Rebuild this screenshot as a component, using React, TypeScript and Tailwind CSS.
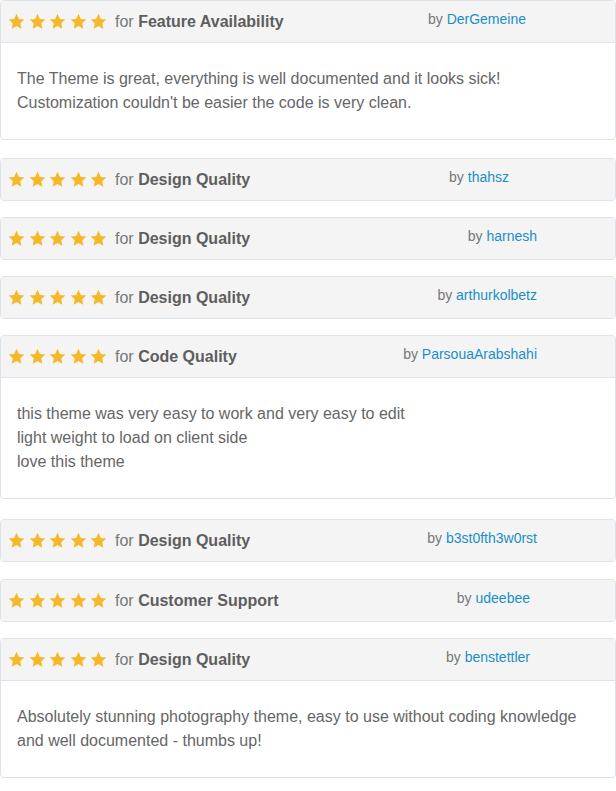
const reviews = [
  {
    category: 'Feature Availability',
    author: 'DerGemeine',
    byPad: 'pr-[89px]',
    gap: 'mb-[18px]',
    body: ['The Theme is great, everything is well documented and it looks sick!', "Customization couldn't be easier the code is very clean."],
  },
  { category: 'Design Quality', author: 'thahsz', byPad: 'pr-[106px]', gap: 'mb-4' },
  { category: 'Design Quality', author: 'harnesh', byPad: 'pr-[78px]', gap: 'mb-4' },
  { category: 'Design Quality', author: 'arthurkolbetz', byPad: 'pr-[78px]', gap: 'mb-4' },
  {
    category: 'Code Quality',
    author: 'ParsouaArabshahi',
    byPad: 'pr-[78px]',
    gap: 'mb-5',
    body: ['this theme was very easy to work and very easy to edit', 'light weight to load on client side', 'love this theme'],
  },
  { category: 'Design Quality', author: 'b3st0fth3w0rst', byPad: 'pr-[78px]', gap: 'mb-[17px]' },
  { category: 'Customer Support', author: 'udeebee', byPad: 'pr-[85px]', gap: 'mb-4' },
  {
    category: 'Design Quality',
    author: 'benstettler',
    byPad: 'pr-[85px]',
    gap: 'mb-4',
    body: ['Absolutely stunning photography theme, easy to use without coding knowledge', 'and well documented - thumbs up!'],
  },
];

function Star() {
  return (
    <svg viewBox="0 0 24 24" className="w-[17px] h-[17px]">
      <path
        d="M12 1.2l3.3 7.1 7.7.9-5.7 5.3 1.5 7.7L12 18.4l-6.8 3.8 1.5-7.7L1 9.2l7.7-.9z"
        fill="#f5b82a"
      />
    </svg>
  );
}

export default function App() {
  return (
    <div className="w-[616px] bg-white font-['Liberation_Sans',Arial,sans-serif]">
      {reviews.map((r, i) => (
        <div key={i} className={`border border-[#dde3ea] rounded-[4px] overflow-hidden ${r.gap}`}>
          <div className={`flex items-center h-[41px] bg-[#f4f4f4] pl-[7px] ${r.body ? 'h-[42px] border-b border-[#dde3ea]' : ''}`}>
            <div className="flex items-center gap-[3.5px]">
              {[0, 1, 2, 3, 4].map((s) => (
                <Star key={s} />
              ))}
            </div>
            <span className="ml-2 text-[16px] text-[#777]">
              for <b className="font-bold text-[#5e5e5e]">{r.category}</b>
            </span>
            <span className={`ml-auto mb-1 text-[14px] text-[#777] ${r.byPad}`}>
              by <a className="text-[#1b8fc5]">{r.author}</a>
            </span>
          </div>
          {r.body && (
            <div className="px-4 py-6 text-[16px] leading-6 text-[#666]">
              {r.body.map((line, j) => (
                <p key={j}>{line}</p>
              ))}
            </div>
          )}
        </div>
      ))}
    </div>
  );
}
